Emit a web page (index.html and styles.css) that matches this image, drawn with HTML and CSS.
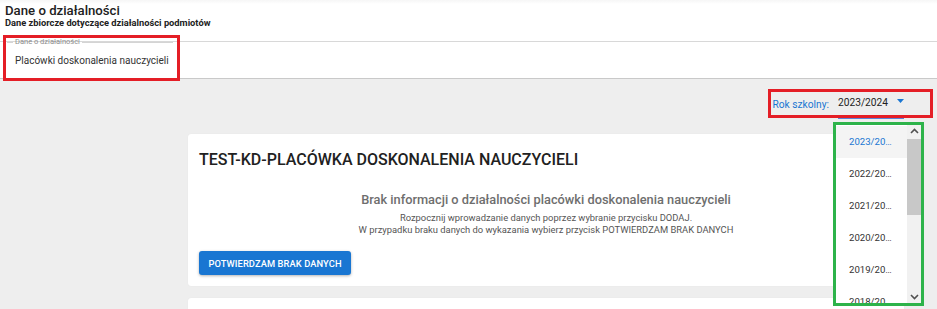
FILE: index.html
```html
<!DOCTYPE html>
<html lang="pl">
<head>
<meta charset="utf-8">
<title>Dane o działalności</title>
<link rel="stylesheet" href="styles.css">
</head>
<body>
<div class="page">
  <header class="head">
    <h1 class="title">Dane o działalności</h1>
    <p class="subtitle">Dane zbiorcze dotyczące działalności podmiotów</p>
  </header>
  <div class="strip">
    <fieldset class="fs">
      <legend class="fs-legend">Dane o działalności</legend>
      <div class="fs-value">Placówki doskonalenia nauczycieli</div>
    </fieldset>
  </div>
  <main class="main">
    <div class="toolbar">
      <div class="year">
        <span class="year-label">Rok szkolny:</span>
        <div class="select">
          <span class="select-value">2023/2024</span>
          <svg class="caret" width="7" height="4" viewBox="0 0 7 4"><path d="M0 0h7L3.5 4z" fill="#1976d2"/></svg>
        </div>
      </div>
    </div>
    <section class="card">
      <h2 class="card-title">TEST-KD-PLACÓWKA DOSKONALENIA NAUCZYCIELI</h2>
      <div class="empty">
        <p class="empty-main">Brak informacji o działalności placówki doskonalenia nauczycieli</p>
        <p class="empty-sub">Rozpocznij wprowadzanie danych poprzez wybranie przycisku DODAJ.</p>
        <p class="empty-sub">W przypadku braku danych do wykazania wybierz przycisk POTWIERDZAM BRAK DANYCH</p>
      </div>
      <button class="btn" type="button">POTWIERDZAM BRAK DANYCH</button>
    </section>
    <section class="card card-next"></section>
  </main>

  <div class="mark mark-tab"></div>
  <div class="mark mark-year"></div>

  <div class="menu">
    <ul class="menu-list">
      <li class="menu-item is-selected">2023/2024</li>
      <li class="menu-item">2022/2023</li>
      <li class="menu-item">2021/2022</li>
      <li class="menu-item">2020/2021</li>
      <li class="menu-item">2019/2020</li>
      <li class="menu-item">2018/2019</li>
    </ul>
    <div class="scrollbar">
      <svg class="chev" width="9" height="6" viewBox="0 0 9 6"><path d="M1 5L4.5 1.5L8 5" fill="none" stroke="#505050" stroke-width="1.6"/></svg>
      <div class="thumb"></div>
      <div class="track-rest"></div>
      <svg class="chev" width="9" height="6" viewBox="0 0 9 6"><path d="M1 1L4.5 4.5L8 1" fill="none" stroke="#505050" stroke-width="1.6"/></svg>
    </div>
  </div>
</div>
</body>
</html>
```
FILE: styles.css
```css
* { box-sizing: border-box; }
html, body { margin: 0; padding: 0; }
body {
  font-family: Roboto, "Liberation Sans", Arial, sans-serif;
  background: #eeeeee;
  color: #212121;
  width: 937px;
  height: 309px;
  overflow: hidden;
}
.page { position: relative; height: 309px; }

.head {
  background: linear-gradient(#f6f6f6, #ffffff 4px);
  height: 42px;
  padding: 3px 5px 0;
  border-bottom: 1px solid #d8d8d8;
}
.title {
  margin: 0;
  font-size: 13.2px;
  line-height: 15px;
  font-weight: 500;
  color: #212121;
}
.subtitle {
  margin: 0;
  font-size: 9.3px;
  line-height: 10px;
  font-weight: 700;
  color: #212121;
}

.strip {
  display: flow-root;
  background: #fff;
  height: 37px;
  border-bottom: 1px solid #c9c9c9;
  padding-left: 7px;
}
.fs {
  margin: -5px 0 0;
  width: 166px;
  border: 0;
  border-top: 1px solid #d4d4d4;
  padding: 0 0 0 6px;
  min-width: 0;
}
.fs-legend {
  font-size: 7.5px;
  line-height: 10px;
  color: #8c8c8c;
  padding: 0 2px;
}
.fs-value {
  margin: 7px 0 0 2px;
  font-size: 10px;
  line-height: 14px;
  color: #333;
  white-space: nowrap;
}

.main { padding: 12px 33px 0 188px; }
.toolbar { display: flex; justify-content: flex-end; }
.year { display: flex; align-items: flex-end; }
.year-label {
  font-size: 10.2px;
  line-height: 16px;
  color: #1976d2;
  padding-bottom: 6px;
  margin-right: 9px;
}
.select {
  width: 66px;
  display: flex;
  align-items: center;
  justify-content: space-between;
  padding: 4px 0 6px;
  border-bottom: 2px solid #5a82d8;
}
.select-value { font-size: 10.2px; line-height: 16px; color: #222; }
.caret { margin-right: 0; margin-top: -4px; }

.card {
  margin-top: 15px;
  background: #fff;
  border-radius: 3px;
  padding: 16px 11px 11px;
  box-shadow: 0 0 1px rgba(0,0,0,0.08);
}
.card-title {
  margin: 0;
  font-size: 16px;
  line-height: 20px;
  font-weight: 500;
  color: #212121;
}
.empty { text-align: center; margin-top: 22px; }
.empty-main {
  margin: 0 0 4px;
  font-size: 12.8px;
  line-height: 16px;
  font-weight: 500;
  color: #6e6e6e;
}
.empty-sub {
  margin: 0;
  font-size: 9.4px;
  line-height: 12px;
  color: #555;
}
.btn {
  margin-top: 15px;
  height: 24px;
  width: 152px;
  padding: 0;
  border: 0;
  border-radius: 3px;
  background: #1976d2;
  color: #fff;
  font-family: inherit;
  font-size: 9.3px;
  font-weight: 500;
  letter-spacing: 0.1px;
  box-shadow: 0 1px 3px rgba(0,0,0,0.3);
}
.card-next { margin-top: 12px; height: 40px; }

.mark { position: absolute; border: 3px solid #e41e26; }
.mark-tab { left: 3px; top: 35px; width: 177px; height: 46px; }
.mark-year { left: 768px; top: 89px; width: 165px; height: 29px; }

.menu {
  position: absolute;
  left: 833px;
  top: 122px;
  width: 91px;
  height: 184px;
  border: 3px solid #2db34a;
  background: #fff;
  display: flex;
  overflow: hidden;
}
.menu-list {
  list-style: none;
  margin: 0;
  padding: 1px 0 0;
  width: 71px;
}
.menu-item {
  height: 32px;
  line-height: 32px;
  padding: 0 12px 0 13px;
  font-size: 9.6px;
  color: #333;
  white-space: nowrap;
  overflow: hidden;
  text-overflow: ellipsis;
}
.menu-item.is-selected { background: #f4f4f4; color: #1976d2; }
.scrollbar {
  width: 14px;
  background: #f1f1f1;
  display: flex;
  flex-direction: column;
  align-items: center;
}
.chev { flex: none; margin: 3px 0; }
.thumb { width: 14px; height: 76px; background: #c8c8c8; margin-top: 2px; }
.track-rest { flex: 1; }
```
